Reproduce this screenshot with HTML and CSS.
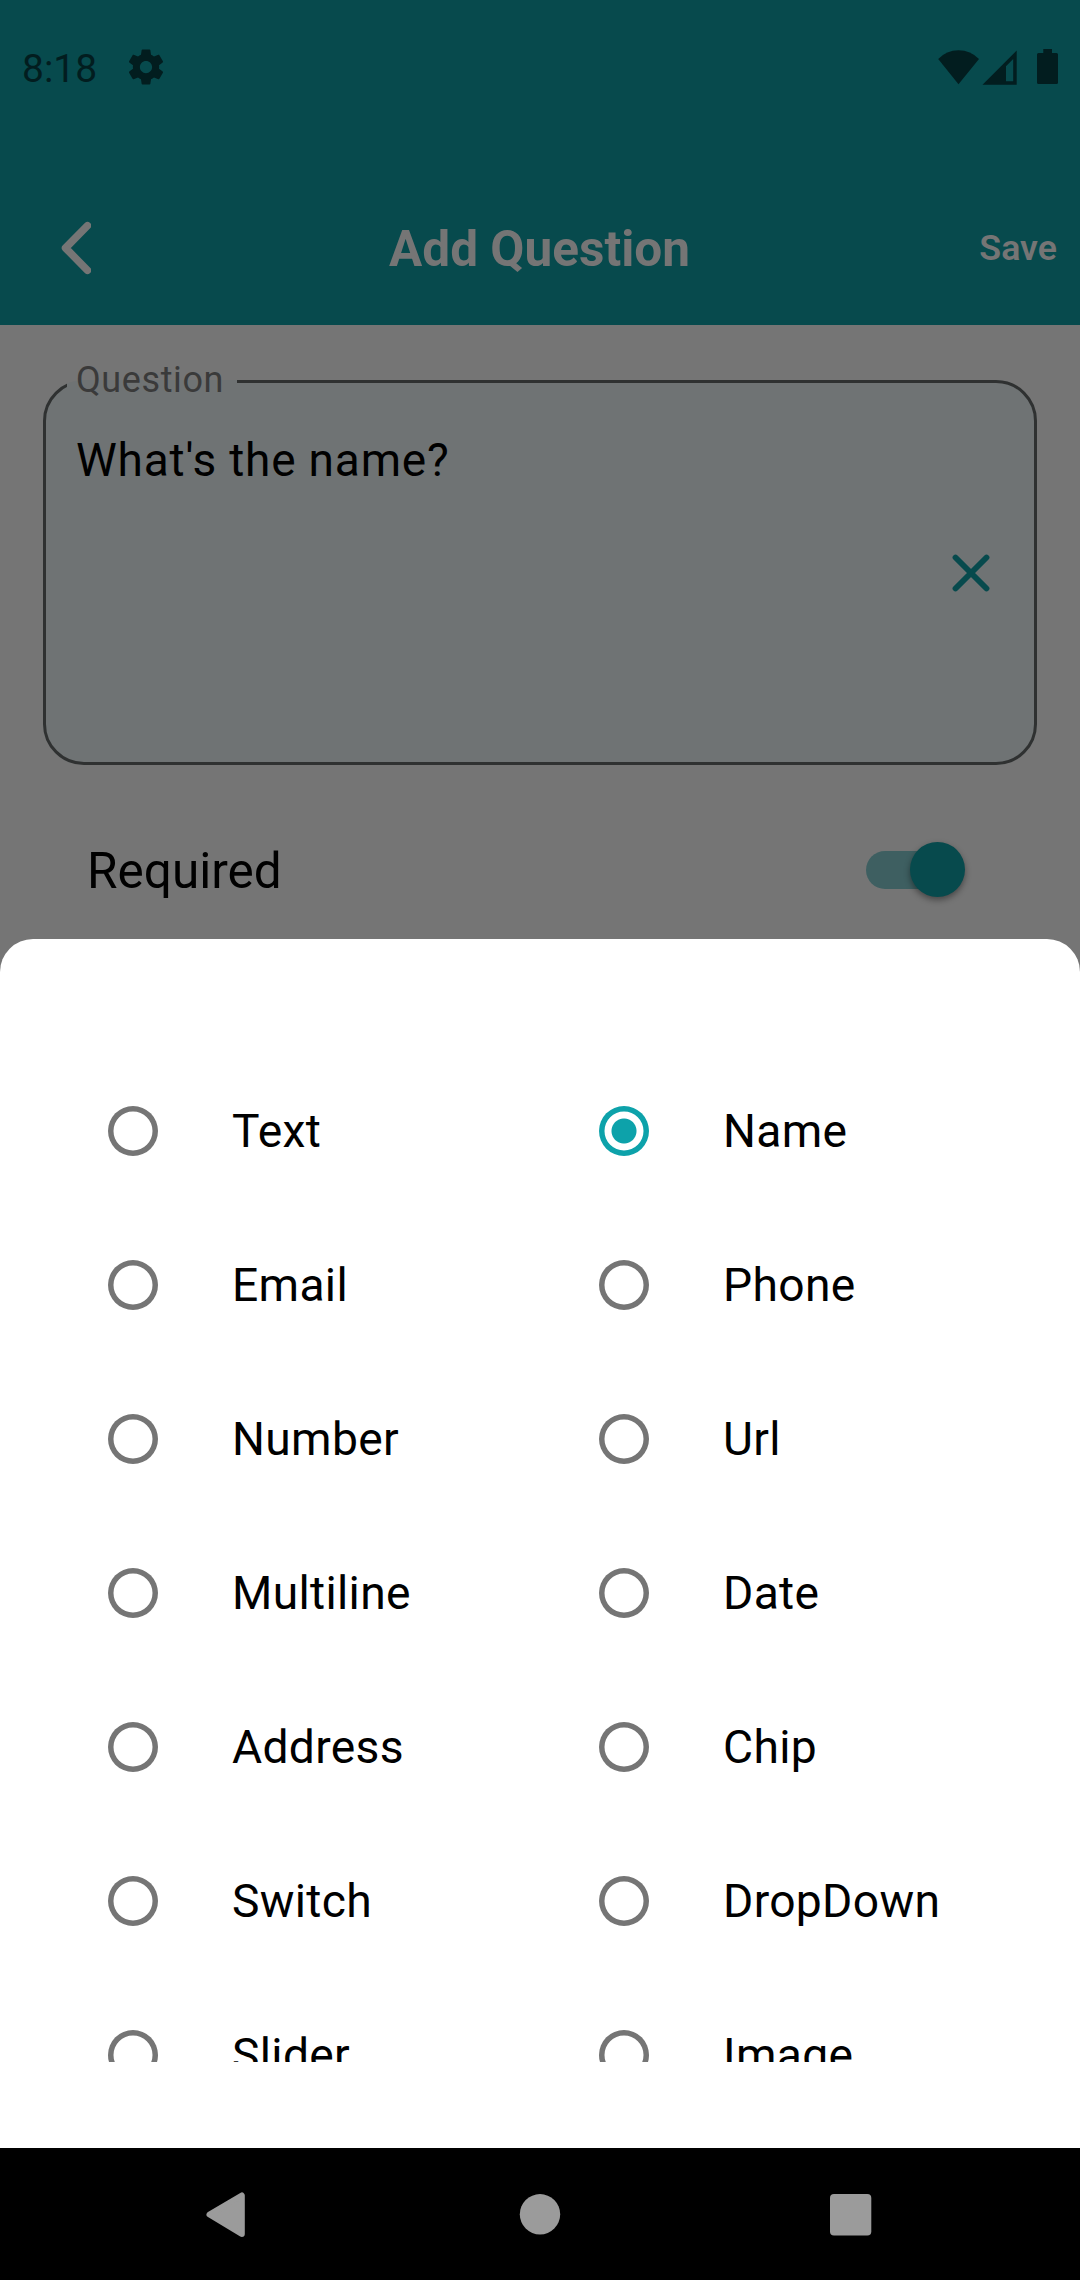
FILE: index.html
```html
<!DOCTYPE html>
<html lang="en">
<head>
<meta charset="utf-8">
<title>Add Question</title>
<link rel="stylesheet" href="styles.css">
</head>
<body>
<div class="screen">
  <header class="header">
    <div class="status-bar">
      <span class="clock">8:18</span>
      <svg class="gear" viewBox="0 0 24 24"><path d="M19.43 12.98c.04-.32.07-.64.07-.98s-.03-.66-.07-.98l2.11-1.65c.19-.15.24-.42.12-.64l-2-3.46c-.12-.22-.39-.3-.61-.22l-2.49 1c-.52-.4-1.08-.73-1.69-.98l-.38-2.65C14.46 2.18 14.25 2 14 2h-4c-.25 0-.46.18-.49.42l-.38 2.65c-.61.25-1.17.59-1.69.98l-2.49-1c-.23-.09-.49 0-.61.22l-2 3.46c-.13.22-.07.49.12.64l2.11 1.65c-.04.32-.07.65-.07.98s.03.66.07.98l-2.11 1.65c-.19.15-.24.42-.12.64l2 3.46c.12.22.39.3.61.22l2.49-1c.52.4 1.08.73 1.69.98l.38 2.65c.03.24.24.42.49.42h4c.25 0 .46-.18.49-.42l.38-2.65c.61-.25 1.17-.59 1.69-.98l2.49 1c.23.09.49 0 .61-.22l2-3.46c.12-.22.07-.49-.12-.64l-2.11-1.65zM12 15.5c-1.93 0-3.5-1.57-3.5-3.5s1.57-3.5 3.5-3.5 3.5 1.57 3.5 3.5-1.57 3.5-3.5 3.5z"/></svg>
      <svg class="system-icons" viewBox="0 0 122 38">
        <path d="M2.200 11Q10.500 2.200 22.500 2.200T43 11L22.500 36.200Z"/>
        <path fill-rule="evenodd" d="M46.500 36.700 80.700 2.500V36.700ZM70 33.200H77.200V11L70 18.200Z"/>
        <path d="M107.300 1h8.700v4h4.500a1.500 1.500 0 0 1 1.500 1.500v28a1.500 1.500 0 0 1-1.500 1.500h-18a1.500 1.500 0 0 1-1.500-1.500v-28a1.500 1.500 0 0 1 1.500-1.500h4.800Z"/>
      </svg>
    </div>
    <div class="app-bar">
      <svg class="back" viewBox="0 0 32 54"><path d="M28.500 4.700 6.500 27 28.500 49.300"/></svg>
      <h1 class="title">Add Question</h1>
      <span class="save">Save</span>
    </div>
  </header>
  <main class="form">
    <fieldset class="field">
      <legend class="field-label">Question</legend>
      <div class="field-text">What's the name?</div>
      <svg class="clear" viewBox="0 0 38 38"><path d="M3.500 3.500l31 31M34.500 3.500l-31 31"/></svg>
    </fieldset>
    <div class="required-row">
      <span class="required">Required</span>
      <span class="switch"><span class="thumb"></span></span>
    </div>
  </main>
  <section class="sheet">
    <div class="options">
      <div class="option"><i class="radio"></i><span>Text</span></div>
      <div class="option"><i class="radio checked"></i><span>Name</span></div>
      <div class="option"><i class="radio"></i><span>Email</span></div>
      <div class="option"><i class="radio"></i><span>Phone</span></div>
      <div class="option"><i class="radio"></i><span>Number</span></div>
      <div class="option"><i class="radio"></i><span>Url</span></div>
      <div class="option"><i class="radio"></i><span>Multiline</span></div>
      <div class="option"><i class="radio"></i><span>Date</span></div>
      <div class="option"><i class="radio"></i><span>Address</span></div>
      <div class="option"><i class="radio"></i><span>Chip</span></div>
      <div class="option"><i class="radio"></i><span>Switch</span></div>
      <div class="option"><i class="radio"></i><span>DropDown</span></div>
      <div class="option"><i class="radio"></i><span>Slider</span></div>
      <div class="option"><i class="radio"></i><span>Image</span></div>
    </div>
  </section>
  <nav class="nav-bar">
    <svg viewBox="0 0 1080 132">
      <path class="nav-back" d="M209.500 66.500 241.800 47.500V86Z"/>
      <circle cx="540" cy="66.300" r="20.200"/>
      <rect x="830" y="46" width="41.300" height="41.500" rx="4"/>
    </svg>
  </nav>
</div>
</body>
</html>
```
FILE: styles.css
```css
* { box-sizing: border-box; }
body { margin: 0; font-family: Roboto, "Liberation Sans", sans-serif; color: #000; }
svg { display: block; flex: none; }
.screen { display: flex; flex-direction: column; width: 1080px; height: 2280px; background: #757575; overflow: hidden; }

.header { height: 325px; background: #074a4d; flex: none; }
.status-bar { display: flex; align-items: center; height: 134px; padding: 0 22px; color: #021d1f; fill: #021d1f; }
.clock { font-size: 39px; line-height: 46px; width: 103px; padding-top: 4px; }
.gear { width: 42px; height: 42px; }
.system-icons { width: 122px; height: 38px; margin-left: auto; }
.app-bar { display: grid; grid-template-columns: 180px 1fr 180px; align-items: center; height: 191px; padding: 37px 23px 0 59px; color: #757575; }
.back { width: 32px; height: 54px; fill: none; stroke: #757575; stroke-width: 7.5; stroke-linecap: round; stroke-linejoin: round; }
.title { margin: 0 37px 0 0; padding-top: 2px; font-size: 49.5px; line-height: 58px; font-weight: 700; text-align: center; white-space: nowrap; }
.save { font-size: 35.75px; line-height: 42px; font-weight: 600; text-align: right; }

.form { height: 614px; flex: none; padding: 35px 43px 0; }
.field { display: flex; justify-content: space-between; margin: 0; padding: 0 44px 0 21px; width: 994px; height: 405px; border: 3px solid #2f3131; border-radius: 41px; background: #6f7374; }
.field-label { padding: 1px 15px 3px 9px; width: 170px; height: 42px; font-size: 36px; line-height: 38px; letter-spacing: .6px; color: #3a3a3a; }
.field-text { padding: 31px 0 0 9px; font-size: 46px; line-height: 54px; letter-spacing: .8px; }
.clear { width: 38px; height: 38px; margin-top: 152px; fill: none; stroke: #074a4d; stroke-width: 5.8; stroke-linecap: round; }
.required-row { display: flex; justify-content: space-between; align-items: center; height: 60px; margin-top: 75px; padding: 0 72px 0 44px; }
.required { font-size: 49.5px; line-height: 58px; padding-top: 2px; }
.switch { display: flex; justify-content: flex-end; align-items: center; width: 99px; height: 38px; border-radius: 19px; background: linear-gradient(90deg, #3e5f61 80px, transparent 80px); }
.thumb { width: 55px; height: 55px; margin-bottom: 1px; border-radius: 50%; background: #074a4d; flex: none; box-shadow: 0 3px 6px rgba(0, 0, 0, .4); }

.sheet { flex: none; height: 1209px; padding: 115px 48px 0; background: #fff; border-radius: 33px 33px 0 0; }
.options { display: grid; grid-template-columns: 491px 1fr; grid-auto-rows: 154px; height: 1008px; overflow: hidden; }
.option { display: flex; align-items: center; gap: 74px; padding-left: 60px; font-size: 46.2px; line-height: 54px; letter-spacing: .33px; }
.radio { width: 50px; height: 50px; margin-bottom: 1px; color: #757575; box-shadow: inset 0 0 0 5.5px currentColor; border-radius: 50%; flex: none; }
.checked { color: #0da2aa; background: radial-gradient(circle, #0da2aa 12px, transparent 13px); }

.nav-bar { flex: none; height: 132px; background: #000; fill: #9b9b9b; }
.nav-bar svg { width: 1080px; height: 132px; }
.nav-back { stroke: #9b9b9b; stroke-width: 6; stroke-linejoin: round; }
```
